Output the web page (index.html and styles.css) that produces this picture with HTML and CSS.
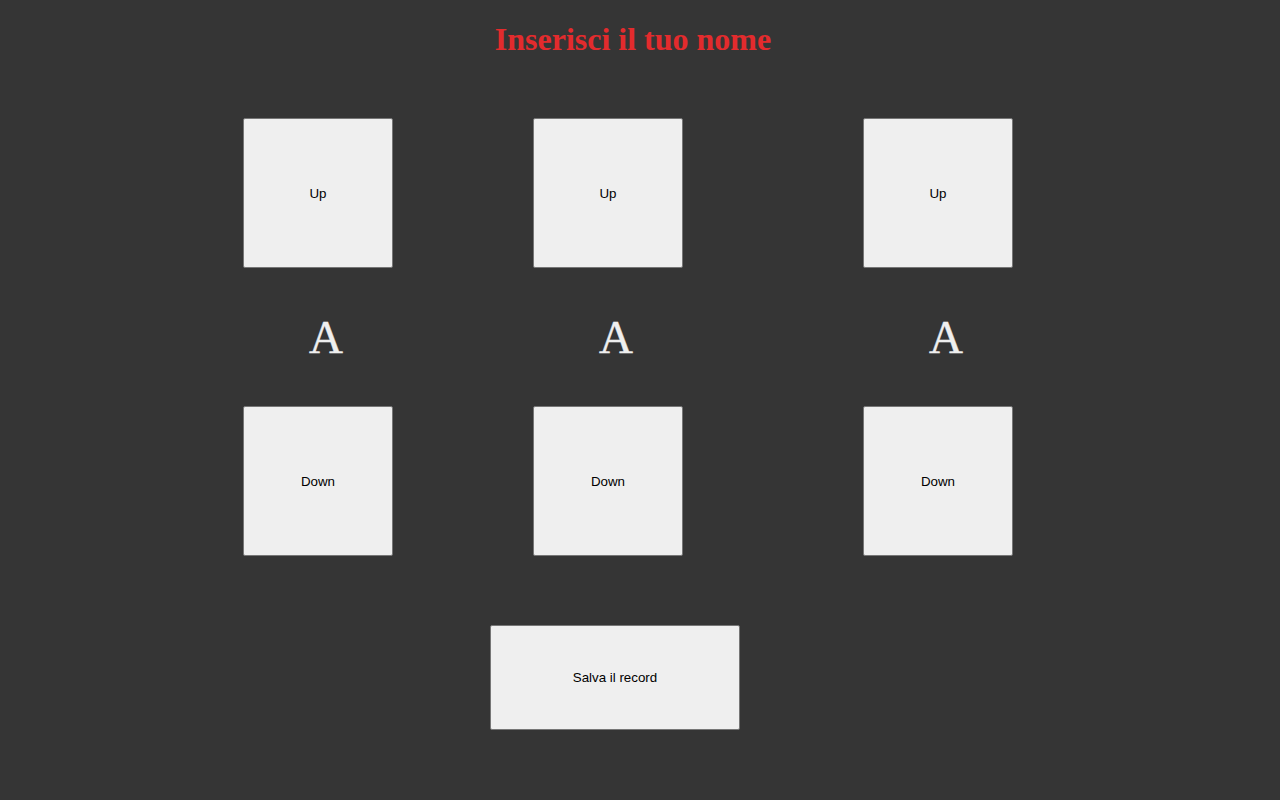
FILE: index.html
```html
<!DOCTYPE html>
<html lang="it">
<head>
<meta charset="utf-8">
<title>Inserisci il tuo nome</title>
<link rel="stylesheet" href="styles.css">
</head>
<body>
<h1 class="title">Inserisci il tuo nome</h1>
<div class="row">
  <div class="col">
    <button class="btn sq">Up</button>
    <div class="letter">A</div>
    <button class="btn sq">Down</button>
  </div>
  <div class="col col2">
    <button class="btn sq">Up</button>
    <div class="letter">A</div>
    <button class="btn sq">Down</button>
  </div>
  <div class="col col3">
    <button class="btn sq">Up</button>
    <div class="letter">A</div>
    <button class="btn sq">Down</button>
  </div>
</div>
<div class="save-wrap">
  <button class="btn save">Salva il record</button>
</div>
</body>
</html>
```
FILE: styles.css
```css
html, body {
  margin: 0;
  padding: 0;
  background: #353535;
  height: 100%;
}
body {
  font-family: "Liberation Serif", "Times New Roman", serif;
}
.title {
  margin: 19px 0 0 0;
  padding-right: 14px;
  font-size: 32px;
  line-height: 40px;
  font-weight: bold;
  text-align: center;
  color: #e32b2d;
}
.row {
  display: flex;
  padding-left: 243px;
  margin-top: 59px;
}
.col {
  width: 150px;
  display: flex;
  flex-direction: column;
  align-items: center;
}
.col2 { margin-left: 140px; }
.col3 { margin-left: 180px; }
.btn {
  box-sizing: border-box;
  background: #efefef;
  border: 1px solid #767676;
  border-radius: 2px;
  color: #000;
  font-family: "Liberation Sans", Arial, sans-serif;
  font-size: 13.333px;
  padding: 0;
  margin: 0;
}
.sq {
  width: 150px;
  height: 150px;
}
.letter {
  margin: 39px 0 39px 0;
  padding-left: 16px;
  font-family: "Liberation Serif", "Times New Roman", serif;
  font-size: 47px;
  line-height: 60px;
  color: #efefef;
  -webkit-text-stroke: 0.4px #efefef;
}
.save-wrap {
  padding-left: 490px;
  margin-top: 69px;
}
.save {
  width: 250px;
  height: 105px;
}
```
